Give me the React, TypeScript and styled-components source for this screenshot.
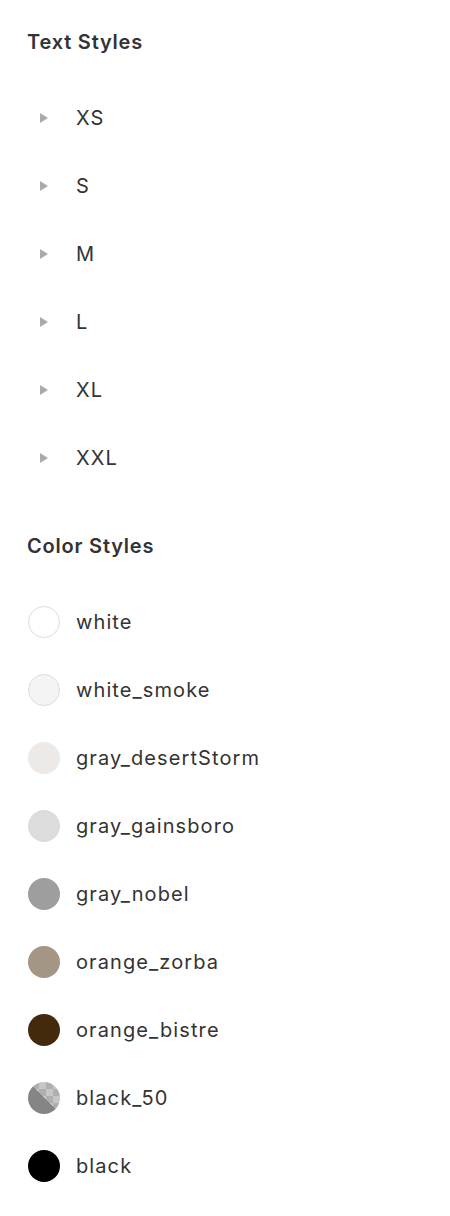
import styled, { createGlobalStyle } from 'styled-components'

const GlobalStyle = createGlobalStyle`
  html, body {
    margin: 0;
    padding: 0;
    background: #ffffff;
  }
  body {
    font-family: Inter, "Noto Sans", sans-serif;
    color: #333333;
  }
`

type Swatch = {
  name: string
  color: string
  bordered?: boolean
  translucent?: boolean
}

const textStyles = ['XS', 'S', 'M', 'L', 'XL', 'XXL']

const colorStyles: Swatch[] = [
  { name: 'white', color: '#ffffff', bordered: true },
  { name: 'white_smoke', color: '#f4f4f4', bordered: true },
  { name: 'gray_desertStorm', color: '#ede9e6' },
  { name: 'gray_gainsboro', color: '#dcdcdc' },
  { name: 'gray_nobel', color: '#9e9e9e' },
  { name: 'orange_zorba', color: '#a59584' },
  { name: 'orange_bistre', color: '#442a0c' },
  { name: 'black_50', color: '#858585', translucent: true },
  { name: 'black', color: '#000000' },
]

const App = () => {
  return (
    <>
      <GlobalStyle />
      <StyledPage>
        <StyledSection>
          <StyledHeading>Text Styles</StyledHeading>
          <StyledList>
            {textStyles.map((label) => (
              <StyledRow key={label}>
                <StyledCaret viewBox="0 0 8 10" aria-hidden>
                  <path d="M0 0 L8 5 L0 10 Z" />
                </StyledCaret>
                <StyledLabel>{label}</StyledLabel>
              </StyledRow>
            ))}
          </StyledList>
        </StyledSection>

        <StyledSection>
          <StyledHeading>Color Styles</StyledHeading>
          <StyledList>
            {colorStyles.map((swatch) => (
              <StyledRow key={swatch.name}>
                <StyledDot
                  $color={swatch.color}
                  $bordered={swatch.bordered}
                  $translucent={swatch.translucent}
                />
                <StyledLabel>{swatch.name}</StyledLabel>
              </StyledRow>
            ))}
          </StyledList>
        </StyledSection>
      </StyledPage>
    </>
  )
}

export default App

const StyledPage = styled.div`
  display: flex;
  flex-direction: column;
  gap: 42px;
  padding: 30px 0 0 27px;
  width: 450px;
  box-sizing: border-box;
`

const StyledSection = styled.section`
  display: flex;
  flex-direction: column;
`

const StyledHeading = styled.h2`
  margin: 0 0 30px;
  font-size: 20px;
  line-height: 24px;
  font-weight: 600;
  letter-spacing: 0.8px;
  color: #333333;
`

const StyledList = styled.div`
  display: flex;
  flex-direction: column;
`

const StyledRow = styled.div`
  display: flex;
  align-items: center;
  height: 68px;
`

const StyledCaret = styled.svg`
  width: 8px;
  height: 10px;
  margin-left: 13px;
  margin-right: 28px;
  fill: #aaaaaa;
`

const StyledDot = styled.span<{ $color: string; $bordered?: boolean; $translucent?: boolean }>`
  width: 32px;
  height: 32px;
  margin-left: 1px;
  margin-right: 16px;
  border-radius: 50%;
  box-sizing: border-box;
  flex-shrink: 0;
  background: ${({ $color, $translucent }) =>
    $translucent
      ? `linear-gradient(45deg, ${$color} 50%, transparent 50%),
         repeating-conic-gradient(#c6c6c6 0% 25%, #afafaf 0% 50%) 4px 0 / 14px 14px`
      : $color};
  border: ${({ $bordered }) => ($bordered ? '1px solid #dddddd' : 'none')};
`

const StyledLabel = styled.span`
  font-size: 20px;
  line-height: 24px;
  font-weight: 400;
  letter-spacing: 1.1px;
  color: #333333;
`
